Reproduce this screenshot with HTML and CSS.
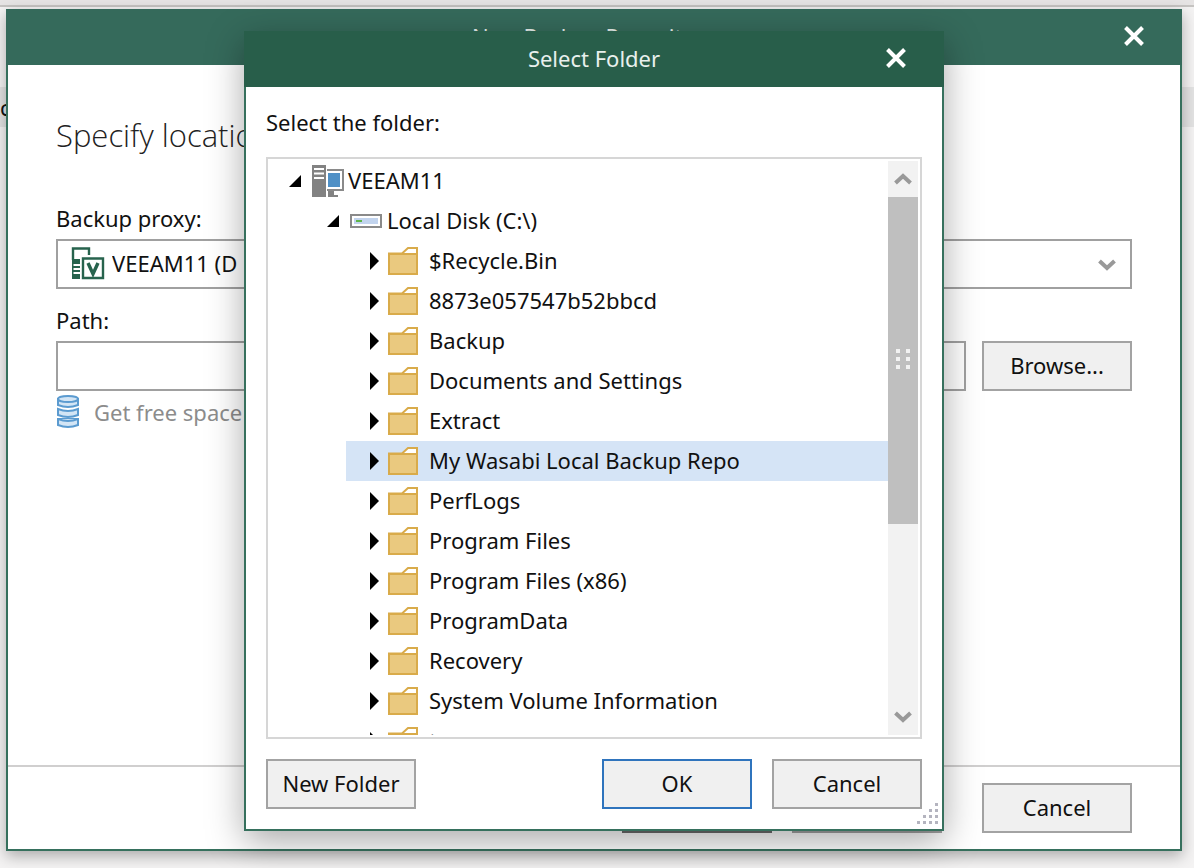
FILE: index.html
```
<!DOCTYPE html>
<html lang="en">
<head>
<meta charset="utf-8">
<title>Select Folder</title>
<link rel="stylesheet" href="styles.css">
</head>
<body>
<svg class="defs" aria-hidden="true">
  <symbol id="folder" viewBox="0 0 30 28"><path d="M1 6.500H14L20 1H29V27H1Z" fill="#fff" stroke="#d9ab4a" stroke-width="2"/><path d="M1 7H29V27H1Z" fill="#eac97f" stroke="#d9ab4a" stroke-width="2"/></symbol>
  <symbol id="closed" viewBox="0 0 10 18"><path d="M1 0L10 9L1 18Z"/></symbol>
  <symbol id="open" viewBox="0 0 14 14"><path d="M13 1V13H1Z"/></symbol>
  <symbol id="close" viewBox="0 0 20 20"><path d="M1.500 1.500L18.500 18.500M18.500 1.500L1.500 18.500" stroke="#fff" stroke-width="4"/></symbol>
  <symbol id="chev" viewBox="0 0 18 12"><path d="M1.500 2L9 9L16.500 2" fill="none" stroke="#999" stroke-width="4"/></symbol>
</svg>
<div class="strip"></div>
<div class="behind"><span>c</span></div>
<main class="window wizard">
  <header class="bar bar-back">
    <h1>New Backup Repository</h1>
    <button class="close" aria-label="Close wizard"><svg><use href="#close"/></svg></button>
  </header>
  <form class="form">
    <h2>Specify location</h2>
    <label for="proxy">Backup proxy:</label>
    <div class="combo">
      <svg class="proxy-icon" viewBox="0 0 34 34"><path d="M2 14V2.500H18V9" fill="none" stroke="#27634d" stroke-width="2.400"/><path d="M1 13H9V33H1Z" fill="#27634d"/><path d="M2.500 19H9M2.500 23H9M2.500 27H9" stroke="#fff" stroke-width="2"/><path d="M12 12.500H32V32H12Z" fill="#fff" stroke="#27634d" stroke-width="2.400"/><path d="M17 17L22 28L27 17" fill="none" stroke="#27634d" stroke-width="3.400"/></svg>
      <select id="proxy"><option>VEEAM11 (D</option></select>
      <svg class="combo-arrow"><use href="#chev"/></svg>
    </div>
    <label for="path">Path:</label>
    <div class="path-row">
      <input id="path" type="text">
      <button type="button">Browse...</button>
    </div>
    <div class="space">
      <svg viewBox="0 0 24 34"><g fill="#d3e5f5" stroke="#5b9bd0" stroke-width="2"><path d="M2 24V30Q12 34 22 30V24Z"/><path d="M2 24Q12 28 22 24"/><path d="M2 14V20Q12 24 22 20V14Q12 18 2 14Z"/><path d="M2 4V10Q12 14 22 10V4Z"/><ellipse cx="12" cy="4" rx="10" ry="3"/></g></svg>
      <span>Get free space</span>
    </div>
  </form>
  <footer class="wizard-foot">
    <button class="dark" aria-label="Finish"></button>
    <button aria-label="Back"></button>
    <button>Cancel</button>
  </footer>
</main>
<section class="window dialog" role="dialog" aria-label="Select Folder">
  <header class="bar">
    <h1>Select Folder</h1>
    <button class="close" aria-label="Close"><svg><use href="#close"/></svg></button>
  </header>
  <div class="dialog-body">
    <p class="prompt">Select the folder:</p>
    <div class="tree">
      <ul class="rows">
        <li class="row root"><svg class="open"><use href="#open"/></svg><svg class="server" viewBox="0 0 32 32"><path d="M0 0H14V32H0Z" fill="#828282"/><path d="M2 4H12M2 8.500H12M2 13H12" stroke="#fff" stroke-width="1.800"/><path d="M15 5H31V25H15" fill="#fff" stroke="#8a8a8a" stroke-width="2"/><path d="M16 8H28V22H16Z" fill="#4f90c6"/><path d="M16 26H22V30H26V32H16Z" fill="#828282"/></svg><span>VEEAM11</span></li>
        <li class="row disk-row"><svg class="open"><use href="#open"/></svg><svg class="disk" viewBox="0 0 32 14"><path d="M1 1H31V13H1Z" fill="#fff" stroke="#8a8a8a" stroke-width="2"/><path d="M4 4H28V10H4Z" fill="#c2d4ee"/><path d="M6 6H12V8H6Z" fill="#5fb548"/></svg><span>Local Disk (C:\)</span></li>
        <li class="row item"><svg class="closed"><use href="#closed"/></svg><svg class="folder"><use href="#folder"/></svg><span>$Recycle.Bin</span></li>
        <li class="row item"><svg class="closed"><use href="#closed"/></svg><svg class="folder"><use href="#folder"/></svg><span>8873e057547b52bbcd</span></li>
        <li class="row item"><svg class="closed"><use href="#closed"/></svg><svg class="folder"><use href="#folder"/></svg><span>Backup</span></li>
        <li class="row item"><svg class="closed"><use href="#closed"/></svg><svg class="folder"><use href="#folder"/></svg><span>Documents and Settings</span></li>
        <li class="row item"><svg class="closed"><use href="#closed"/></svg><svg class="folder"><use href="#folder"/></svg><span>Extract</span></li>
        <li class="row item selected"><svg class="closed"><use href="#closed"/></svg><svg class="folder"><use href="#folder"/></svg><span>My Wasabi Local Backup Repo</span></li>
        <li class="row item"><svg class="closed"><use href="#closed"/></svg><svg class="folder"><use href="#folder"/></svg><span>PerfLogs</span></li>
        <li class="row item"><svg class="closed"><use href="#closed"/></svg><svg class="folder"><use href="#folder"/></svg><span>Program Files</span></li>
        <li class="row item"><svg class="closed"><use href="#closed"/></svg><svg class="folder"><use href="#folder"/></svg><span>Program Files (x86)</span></li>
        <li class="row item"><svg class="closed"><use href="#closed"/></svg><svg class="folder"><use href="#folder"/></svg><span>ProgramData</span></li>
        <li class="row item"><svg class="closed"><use href="#closed"/></svg><svg class="folder"><use href="#folder"/></svg><span>Recovery</span></li>
        <li class="row item"><svg class="closed"><use href="#closed"/></svg><svg class="folder"><use href="#folder"/></svg><span>System Volume Information</span></li>
        <li class="row item"><svg class="closed"><use href="#closed"/></svg><svg class="folder"><use href="#folder"/></svg><span>temp</span></li>
      </ul>
      <div class="scroll">
        <button class="step" aria-label="Scroll up"><svg class="up"><use href="#chev"/></svg></button>
        <div class="thumb"><svg viewBox="0 0 16 22"><path d="M1 0h4v4H1zM11 0h4v4h-4zM1 8h4v4H1zM11 8h4v4h-4zM1 16h4v4H1zM11 16h4v4h-4z" fill="#f2f2f2"/></svg></div>
        <div class="track"></div>
        <button class="step" aria-label="Scroll down"><svg><use href="#chev"/></svg></button>
      </div>
    </div>
    <footer class="dialog-foot">
      <button class="new">New Folder</button>
      <button class="default">OK</button>
      <button>Cancel</button>
    </footer>
  </div>
  <svg class="grip" viewBox="0 0 22 22"><path d="M19 0h3v3h-3zM13 6h3v3h-3zM19 6h3v3h-3zM7 12h3v3H7zM13 12h3v3h-3zM19 12h3v3h-3zM1 18h3v3H1zM7 18h3v3H7zM13 18h3v3h-3zM19 18h3v3h-3z" fill="#b4b4bf"/></svg>
</section>
</body>
</html>
```
FILE: styles.css
```
* { box-sizing: border-box; }
body {
  margin: 0;
  min-height: 100vh;
  padding: 9px 12px 17px 6px;
  display: flex;
  position: relative;
  overflow: hidden;
  background: #f4f3f3;
  font: 22px/30px "Noto Sans", "Open Sans", sans-serif;
  color: #111;
}
.defs { position: absolute; width: 0; height: 0; }
.strip { position: absolute; top: 0; left: 0; right: 0; height: 7px; background: #e6e4e4; border-bottom: 2px solid #c6c4c2; }
.behind { position: absolute; top: 87px; left: 0; right: 0; height: 40px; background: #e3e3e3; }
.behind span { position: absolute; left: 0; top: 5px; }
h1, h2, p, ul { margin: 0; padding: 0; font-weight: 400; }
button, input, select { font: inherit; color: inherit; border-radius: 0; }
button { width: 150px; height: 50px; padding: 0 0 2px; background: #f0f0f0; border: 2px solid #a3a3a3; flex: none; }
.window { background: #fff; border: 2px solid #36705d; display: flex; flex-direction: column; }
.wizard { position: relative; flex: 1; box-shadow: 0 5px 14px rgba(0, 0, 0, .3); }
.dialog { position: absolute; left: 244px; right: 250px; top: 31px; bottom: 37px; box-shadow: 0 10px 34px rgba(0, 0, 0, .34); }
.bar { position: relative; flex: none; height: 56px; margin: -2px -2px 0; padding-bottom: 2px; background: #285e4a; display: flex; align-items: center; justify-content: center; color: #e8f0ed; }
.bar-back { background: #356a5b; }
.bar h1 { font-size: 22px; line-height: 30px; }
.close { position: absolute; right: 37px; top: 16px; width: 22px; height: 22px; padding: 0; background: none; border: 0; display: flex; align-items: center; justify-content: center; }
.close svg { width: 20px; height: 20px; }
.form { flex: 1; padding: 50px 48px 0; display: flex; flex-direction: column; }
h2 { font: 300 31px/40px "Open Sans", "Noto Sans", sans-serif; color: #222; margin-bottom: 48px; }
label { margin-bottom: 6px; }
.combo { position: relative; height: 50px; margin-bottom: 16px; }
.combo select { width: 100%; height: 50px; appearance: none; background: #fff; border: 2px solid #a0a0a0; padding: 0 0 2px 54px; }
.proxy-icon { position: absolute; left: 15px; top: 7px; width: 34px; height: 34px; }
.combo-arrow { position: absolute; right: 16px; top: 20px; width: 18px; height: 12px; }
.path-row { display: flex; gap: 16px; }
.path-row input { flex: 1; min-width: 0; height: 50px; border: 2px solid #a0a0a0; background: #fff; }
.space { display: flex; align-items: center; gap: 14px; margin-top: 4px; color: #8c8c8c; }
.space svg { width: 24px; height: 34px; }
.wizard-foot { flex: none; border-top: 2px solid #d0cfcf; padding: 16px 48px; display: flex; justify-content: flex-end; gap: 20px; }
.wizard-foot button:last-child { margin-left: 20px; }
.wizard-foot .dark { border-color: #6c6c6c; }
.dialog-body { flex: 1; min-height: 0; padding: 20px 20px 20px; display: flex; flex-direction: column; }
.prompt { margin-bottom: 20px; }
.tree { flex: 1; min-height: 0; border: 2px solid #d6d6d6; padding: 2px; display: flex; }
.rows { flex: 1; list-style: none; overflow: hidden; }
.row { height: 40px; display: flex; align-items: center; white-space: nowrap; }
.row span { padding-bottom: 2px; }
.row svg { flex: none; }
.root { padding-left: 18px; }
.disk-row { padding-left: 56px; }
.item { margin-left: 76px; padding-left: 23px; }
.selected { background: #d5e4f6; }
.open { width: 14px; height: 14px; margin-right: 10px; }
.closed { width: 10px; height: 18px; margin-right: 9px; }
.server { width: 32px; height: 32px; margin-right: 4px; }
.disk { width: 32px; height: 14px; margin-right: 5px; }
.folder { width: 30px; height: 28px; margin-right: 11px; }
.scroll { width: 30px; background: #f2f2f2; display: flex; flex-direction: column; }
.step { width: 30px; height: 36px; padding: 0; background: none; border: 0; display: flex; align-items: center; justify-content: center; }
.step svg { width: 18px; height: 12px; }
.up { transform: rotate(180deg); }
.thumb { flex: 328; background: #bfbfbf; display: flex; align-items: center; justify-content: center; }
.thumb svg { width: 16px; height: 22px; }
.track { flex: 176; }
.dialog-foot { flex: none; display: flex; gap: 20px; margin-top: 20px; }
.new { margin-right: auto; }
.default { border-color: #2f74bd; }
.grip { position: absolute; right: 4px; bottom: 4px; width: 22px; height: 22px; }
```
